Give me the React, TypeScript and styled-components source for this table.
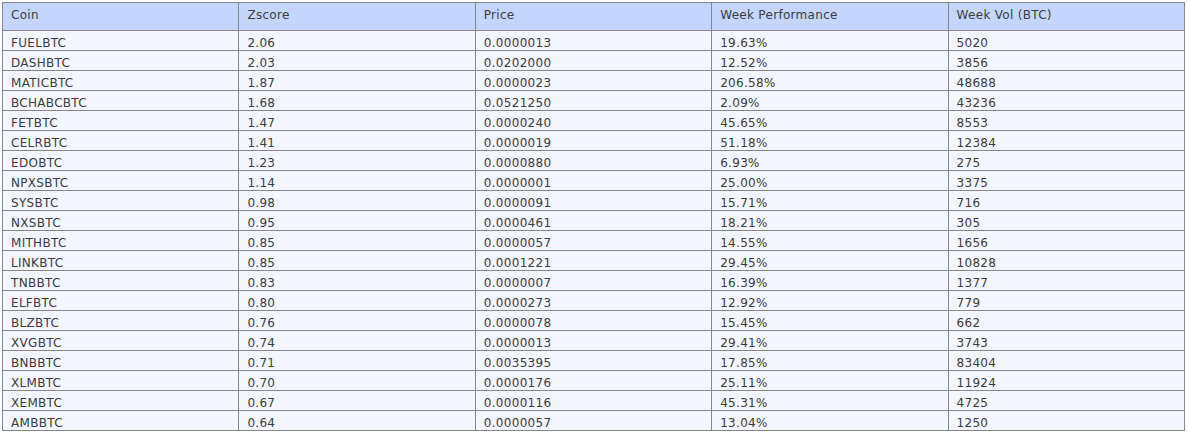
import styled, { createGlobalStyle } from 'styled-components';

const GlobalStyle = createGlobalStyle`
  html, body {
    margin: 0;
    padding: 0;
    background: #ffffff;
  }
  body {
    padding: 2px;
  }
`;

const Table = styled.table`
  width: 1183px;
  border-collapse: collapse;
  table-layout: fixed;
  font-family: 'DejaVu Sans', Verdana, sans-serif;
  font-size: 12px;
  letter-spacing: 0.3px;
  color: #3c3c3c;
  border: 1px solid #888888;
`;

const HeadCell = styled.th`
  height: 24px;
  padding: 0 8px 3px;
  line-height: 14px;
  text-align: left;
  font-weight: normal;
  background: #c5d6fc;
  border: 1px solid #888888;
`;

const Cell = styled.td`
  height: 13px;
  padding: 6px 8px 0;
  line-height: 13px;
  background: #f4f7ff;
  border: 1px solid #888888;
  white-space: nowrap;
`;

type Row = [string, string, string, string, string];

const columns = ['Coin', 'Zscore', 'Price', 'Week Performance', 'Week Vol (BTC)'];

const rows: Row[] = [
  ['FUELBTC', '2.06', '0.0000013', '19.63%', '5020'],
  ['DASHBTC', '2.03', '0.0202000', '12.52%', '3856'],
  ['MATICBTC', '1.87', '0.0000023', '206.58%', '48688'],
  ['BCHABCBTC', '1.68', '0.0521250', '2.09%', '43236'],
  ['FETBTC', '1.47', '0.0000240', '45.65%', '8553'],
  ['CELRBTC', '1.41', '0.0000019', '51.18%', '12384'],
  ['EDOBTC', '1.23', '0.0000880', '6.93%', '275'],
  ['NPXSBTC', '1.14', '0.0000001', '25.00%', '3375'],
  ['SYSBTC', '0.98', '0.0000091', '15.71%', '716'],
  ['NXSBTC', '0.95', '0.0000461', '18.21%', '305'],
  ['MITHBTC', '0.85', '0.0000057', '14.55%', '1656'],
  ['LINKBTC', '0.85', '0.0001221', '29.45%', '10828'],
  ['TNBBTC', '0.83', '0.0000007', '16.39%', '1377'],
  ['ELFBTC', '0.80', '0.0000273', '12.92%', '779'],
  ['BLZBTC', '0.76', '0.0000078', '15.45%', '662'],
  ['XVGBTC', '0.74', '0.0000013', '29.41%', '3743'],
  ['BNBBTC', '0.71', '0.0035395', '17.85%', '83404'],
  ['XLMBTC', '0.70', '0.0000176', '25.11%', '11924'],
  ['XEMBTC', '0.67', '0.0000116', '45.31%', '4725'],
  ['AMBBTC', '0.64', '0.0000057', '13.04%', '1250'],
];

const App = () => {
  return (
    <>
      <GlobalStyle />
      <Table>
        <thead>
          <tr>
            {columns.map((c) => (
              <HeadCell key={c}>{c}</HeadCell>
            ))}
          </tr>
        </thead>
        <tbody>
          {rows.map((r) => (
            <tr key={r[0]}>
              {r.map((v, i) => (
                <Cell key={i}>{v}</Cell>
              ))}
            </tr>
          ))}
        </tbody>
      </Table>
    </>
  );
};

export default App;
